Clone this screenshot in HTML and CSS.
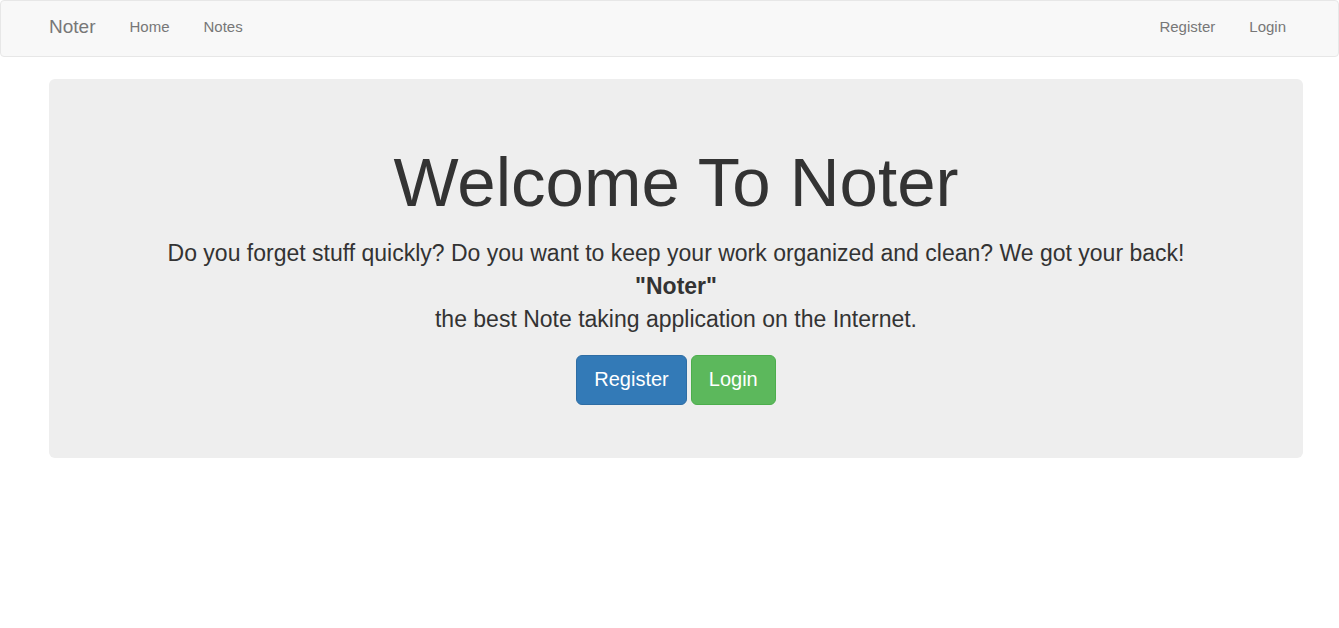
FILE: index.html
```html
<!DOCTYPE html>
<html>
<head>
<meta charset="utf-8">
<title>Noter</title>
<link rel="stylesheet" href="styles.css">
</head>
<body>
<nav class="navbar">
  <div class="nav-left">
    <a class="brand" href="#">Noter</a>
    <a class="nav-link" href="#">Home</a>
    <a class="nav-link" href="#">Notes</a>
  </div>
  <div class="nav-right">
    <a class="nav-link" href="#">Register</a>
    <a class="nav-link" href="#">Login</a>
  </div>
</nav>
<main class="container">
  <section class="jumbotron">
    <h1 class="title">Welcome To Noter</h1>
    <p class="lead">Do you forget stuff quickly? Do you want to keep your work organized and clean? We got your back!<br><strong>"Noter"</strong><br>the best Note taking application on the Internet.</p>
    <div class="actions">
      <a class="btn btn-primary" href="#">Register</a>
      <a class="btn btn-success" href="#">Login</a>
    </div>
  </section>
</main>
</body>
</html>
```
FILE: styles.css
```css
* { box-sizing: border-box; }
html, body { margin: 0; padding: 0; }
body {
  font-family: "Liberation Sans", Arial, sans-serif;
  font-size: 14px;
  line-height: 1.42857;
  color: #333;
  background: #fff;
}
a { text-decoration: none; }
.navbar {
  display: flex;
  justify-content: space-between;
  align-items: center;
  height: 57px;
  background: #f8f8f8;
  border: 1px solid #e7e7e7;
  border-radius: 4px;
  padding: 0 35px 3px 33px;
}
.nav-left, .nav-right { display: flex; align-items: center; }
.brand {
  font-size: 19px;
  color: #777;
  padding: 0 17px 0 15px;
  line-height: 20px;
}
.nav-link {
  font-size: 15px;
  color: #777;
  padding: 0 17px;
  line-height: 20px;
}
.container {
  padding: 22px 36px 0 49px;
}
.jumbotron {
  background: #eee;
  border-radius: 6px;
  padding: 65px 60px 53px;
  text-align: center;
}
.title {
  font-size: 69px;
  font-weight: 400;
  line-height: 77px;
  margin: 0 0 16px;
  color: #333;
}
.lead {
  font-size: 23px;
  line-height: 33px;
  margin: 0 0 19px;
}
.lead strong { font-weight: 700; }
.actions { display: flex; justify-content: center; gap: 4px; }
.btn {
  display: inline-block;
  font-size: 20px;
  line-height: 30px;
  padding: 8px 17px 10px;
  border: 1px solid transparent;
  border-radius: 6px;
  color: #fff;
}
.btn-primary { background: #337ab7; border-color: #2e6da4; }
.btn-success { background: #5cb85c; border-color: #4cae4c; }
```
